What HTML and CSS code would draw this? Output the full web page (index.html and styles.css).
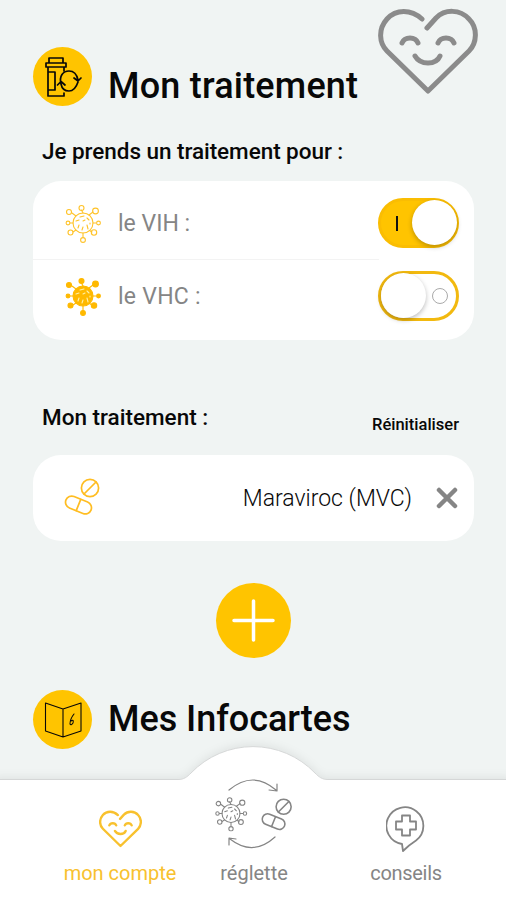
FILE: index.html
```html
<!DOCTYPE html>
<html lang="fr">
<head>
<meta charset="utf-8">
<title>Mon traitement</title>
<link rel="stylesheet" href="styles.css">
</head>
<body>
<svg class="defs" aria-hidden="true">
  <symbol id="heart" viewBox="378 8 100 87">
    <path d="M422 19C411 9 396 9 387 19C378 29 379 43 387 51L428 91L469 51C477 43 478 28 469 19C460 9 445 9 436 18L427 28M402 43Q404 38 410 38T418 43M438 43Q440 38 446 38T454 43M415 56Q419 63 428 63T440 56"/>
  </symbol>
  <symbol id="virus" viewBox="0 0 40 40">
    <circle class="core" cx="20" cy="20" r="10"/>
    <path d="M20 10L18.500 7M26 12L30 9M30 20H33M26.500 27.500L29 29M20 30V34M13 27L10 29M10 20H7M13 13L9 10"/>
    <g class="knobs"><circle cx="18.500" cy="5" r="2.500"/><circle cx="32.500" cy="8" r="2.900"/><circle cx="35.500" cy="20" r="1.900"/><circle cx="31" cy="29.500" r="2.700"/><circle cx="20" cy="37" r="2.400"/><circle cx="7.500" cy="29.500" r="2.500"/><circle cx="5" cy="20" r="1.900"/><circle cx="6" cy="9" r="2.500"/></g>
  </symbol>
  <symbol id="marks" viewBox="0 0 40 40">
    <path d="M17 14l4-1M24 15l2 2M13 18l3-1M15 25l1-3M19 27l1-3M25 26l-1-4M27 21l0-1M20 18l2-1"/>
  </symbol>
  <symbol id="pills" viewBox="0 0 40 40">
    <circle cx="27" cy="10" r="8.600"/><path d="M21 16L33 4"/>
    <g transform="rotate(22 15.500 27)"><rect x="2" y="20.800" width="27" height="12.400" rx="6.200"/><path d="M15.500 21V33"/></g>
  </symbol>
</svg>

<main class="page">
  <svg class="mascot"><use href="#heart"/></svg>
  <header class="heading">
    <span class="badge">
      <svg viewBox="0 0 59 59" width="59" height="59" class="bottle">
        <path d="M16 11H30V16H16ZM13 16H33V20H13ZM15 20V49H31V46M31 20V24M15 25H22V43H15"/>
        <path d="M28 37C26 29 30 24 36 24C41 24 44 28 45 33M45 35C43 41 40 44 36 44C32 44 29 42 28 37M41 31L45 34L48 31M24.500 38L28 34.500L32 38"/>
      </svg>
    </span>
    <h1 class="title">Mon traitement</h1>
  </header>
  <h2 class="label prompt">Je prends un traitement pour :</h2>
  <section class="card choices">
    <div class="row">
      <svg class="virus" viewBox="0 0 40 40"><use href="#virus"/><use href="#marks"/></svg>
      <span class="name vih">le VIH :</span>
      <span class="switch on"><i class="bar"></i><i class="thumb"></i></span>
    </div>
    <div class="row">
      <svg class="virus solid" viewBox="0 0 40 40"><use href="#virus"/><use class="light" href="#marks"/></svg>
      <span class="name vhc">le VHC :</span>
      <span class="switch"><i class="thumb"></i><i class="ring"></i></span>
    </div>
  </section>
  <div class="subhead">
    <h2 class="label mine">Mon traitement :</h2>
    <span class="reset">Réinitialiser</span>
  </div>
  <section class="card drug">
    <svg class="pills"><use href="#pills"/></svg>
    <span class="drug-name">Maraviroc (MVC)</span>
    <svg class="close" viewBox="0 0 22 22"><path d="M3 3L19 19M19 3L3 19"/></svg>
  </section>
  <div class="add"><svg viewBox="0 0 75 75" width="75" height="75"><path d="M37.500 18V57M18 37.500H57"/></svg></div>
  <header class="heading cards-heading">
    <span class="badge">
      <svg viewBox="0 0 59 59" width="59" height="59" class="book">
        <path d="M12.500 13L30 19L48 13V41L30 47L12.500 41ZM30 19V47"/>
        <path d="M41 24Q37 29 37 34Q38 36 40 33Q41 29 38 31"/>
      </svg>
    </span>
    <h1 class="title info">Mes Infocartes</h1>
  </header>
</main>

<nav class="nav">
  <svg class="nav-shape" viewBox="0 0 506 163"><path d="M-5 42.500H178C184 42.500 187 40 191 36A86 86 0 0 1 315 36C319 40 322 42.500 328 42.500H511V170H-5Z"/></svg>
  <div class="tab account">
    <svg class="nav-heart"><use href="#heart"/></svg>
    <span>mon compte</span>
  </div>
  <div class="tab ruler">
    <svg class="cycle" viewBox="213 777 82 74">
      <path d="M229 790Q253 770 276 790M277 784V791L269 790M275 837Q253 857 230 839M229 845V838L236 839"/>
      <use href="#virus" x="213" y="795.500" width="36" height="36"/>
      <use href="#marks" x="213" y="795.500" width="36" height="36"/>
      <use class="dose" href="#pills" x="260" y="798" width="35" height="35"/>
    </svg>
    <span>réglette</span>
  </div>
  <div class="tab advice">
    <svg class="bubble" viewBox="0 0 40 48"><path d="M17 46L16 39A18.500 18.500 0 1 1 30 35.500Q23 40 17 46ZM16 10.500H24V16.500H30V24.500H24V30.500H16V24.500H10V16.500H16Z"/></svg>
    <span>conseils</span>
  </div>
</nav>
</body>
</html>
```
FILE: styles.css
```css
* { box-sizing: border-box; }
body {
  margin: 0;
  width: 506px;
  height: 900px;
  overflow: hidden;
  position: relative;
  background: #f0f4f3;
  color: #080808;
  font-family: Roboto, "Open Sans", sans-serif;
}
svg { display: block; fill: none; stroke: currentColor; stroke-linecap: round; stroke-linejoin: round; flex: none; }
.defs { position: absolute; width: 0; height: 0; }
h1, h2 { margin: 0; font-weight: 500; white-space: nowrap; }
span { white-space: nowrap; }
.page { padding: 47px 32px 0 33px; }
.mascot { position: absolute; left: 378px; top: 8px; width: 100px; height: 87px; color: #8b8b8b; stroke-width: 5px; }
.heading { display: flex; height: 59px; gap: 16px; }
.badge { width: 59px; height: 59px; border-radius: 50%; background: #ffc400; flex: none; }
.bottle { stroke-width: 1.7px; }
.book { stroke-width: 1.1px; }
.title { font-size: 36px; line-height: 42px; padding-top: 18px; letter-spacing: 0.2px; }
.info { padding-top: 8px; letter-spacing: -0.05px; }
.label { font-size: 22.5px; line-height: 28px; padding-left: 9px; }
.prompt { margin-top: 31px; letter-spacing: -0.05px; }
.card { background: #fff; border-radius: 28px; }
.choices { margin-top: 16px; height: 159px; padding: 5px 15px 8px 30px; }
.row { display: flex; align-items: center; height: 73px; }
.row + .row { background: linear-gradient(#f3f3f3, #f3f3f3) 0 0 / 346px 1px no-repeat; margin-left: -30px; padding-left: 30px; }
.virus { width: 40px; height: 40px; color: #ffc329; stroke-width: 1.1px; }
.solid { fill: #ffb900; color: #ffb900; }
.light { color: #fff0a8; }
.name { margin-left: 15px; padding-top: 1px; font-size: 23px; color: #858585; }
.vhc { letter-spacing: 0.25px; }
.switch { position: relative; width: 81px; height: 50px; margin-left: auto; border: 3px solid #f2b90f; border-radius: 25px; background: #fff; }
.on { background: #ffc400; border-color: #fabd02; }
.thumb { position: absolute; left: 0; top: -1px; width: 45px; height: 45px; border-radius: 50%; background: #fff; box-shadow: 0 2px 5px #0004; }
.on .thumb { left: 31px; }
.bar { position: absolute; left: 15px; top: 15px; width: 2px; height: 15px; background: #111; }
.ring { position: absolute; left: 51px; top: 14px; width: 16px; height: 16px; border: 1.5px solid #aaa; border-radius: 50%; }
.subhead { display: flex; justify-content: space-between; margin-top: 63px; height: 36px; padding-right: 15px; }
.reset { font-size: 16.5px; font-weight: 500; line-height: 20px; padding-top: 12px; }
.drug { display: flex; align-items: center; height: 86px; margin-top: 16px; padding: 0 16px 0 30px; }
.pills { width: 40px; height: 40px; color: #ffbd22; stroke-width: 1.7px; }
.drug-name { margin-left: auto; font-size: 23px; font-weight: 300; }
.close { width: 22px; height: 22px; margin-left: 24px; color: #858585; stroke-width: 4.5px; }
.add { width: 75px; height: 75px; border-radius: 50%; margin: 42px 0 0 183px; background: #ffc400; color: #fff; stroke-width: 3.5px; }
.cards-heading { margin-top: 32px; }
.nav { position: absolute; left: 0; bottom: 0; width: 506px; height: 163px; display: flex; padding: 34px 0 0 54px; }
.nav-shape { position: absolute; left: 0; top: 0; width: 506px; height: 163px; overflow: visible; fill: #fff; stroke: #d5d7d7; stroke-width: 1px; filter: drop-shadow(0 -2px 4px #0001); }
.nav-shape + .tab { margin-left: 0; }
.tab { position: relative; display: flex; flex-direction: column; align-items: center; justify-content: flex-end; height: 112px; width: 136px; color: #858585; font-size: 20px; line-height: 24px; margin-top: 2px; }
.account { width: 132px; color: #f8c12e; }
.advice { width: 168px; letter-spacing: -0.3px; }
.nav-heart { width: 43px; height: 38px; stroke-width: 5.5px; margin-bottom: 13px; }
.cycle { width: 82px; height: 74px; stroke-width: 1.2px; margin-bottom: 10px; }
.dose { stroke-width: 1.8px; }
.bubble { width: 40px; height: 48px; stroke-width: 1.8px; margin-bottom: 8px; }
```
